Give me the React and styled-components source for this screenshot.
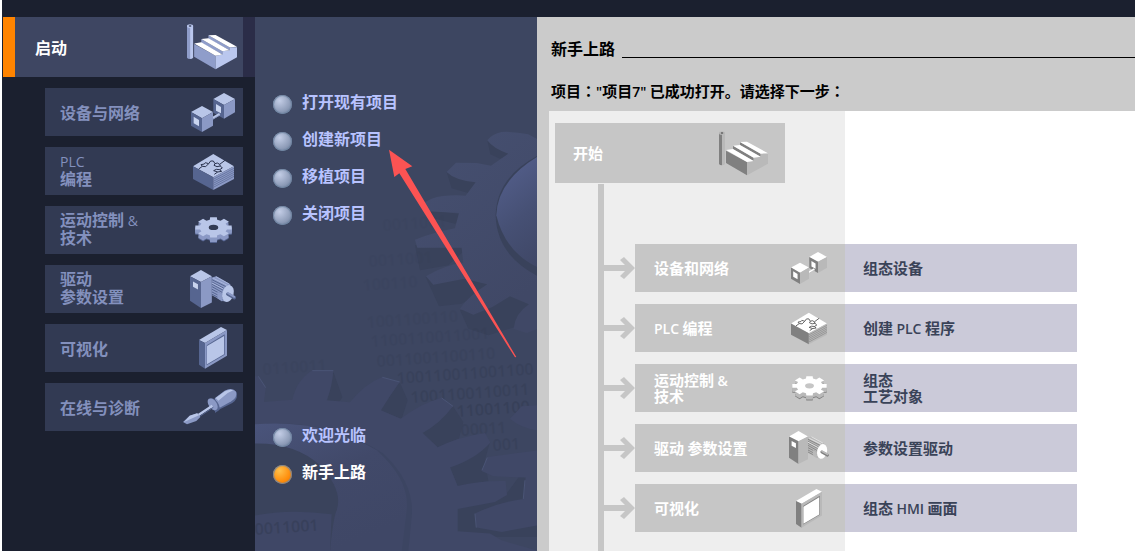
import React from "react";
import styled, { createGlobalStyle } from "styled-components";

const GlobalStyle = createGlobalStyle`
  *, *::before, *::after { box-sizing: border-box; }
  html { background: #fff; }
  body {
    margin: 0;
    font-family: "Noto Sans CJK SC", "Noto Sans", sans-serif;
    font-size: 16px;
    font-weight: 700;
  }
  button { font: inherit; border: 0; padding: 0; background: none; cursor: pointer; text-align: left; }
  a { color: inherit; text-decoration: none; }
  ul { list-style: none; margin: 0; padding: 0; }
`;

const BLUE = { left: "#566590", right: "#8b99c5", top: "#b9c6e8", win: "#c9d4ef", line: "#2c344f", hole: "#323a53" };
const BRIGHT = { left: "#8f9dca", right: "#bac7ee", top: "#ffffff", win: "#ffffff", line: "#2c344f", hole: "#3e4662" };
const GRAY = { left: "#808080", right: "#b9b9b9", top: "#ffffff", win: "#ffffff", line: "#505050", hole: "#c6c6c6" };

/* ---------- drawings ---------- */

const Drawing = styled.svg`
  display: block;
  flex: none;
  width: ${(p) => p.$w}px;
  overflow: visible;
`;

function FactoryIcon({ c, w }) {
  return (
    <Drawing $w={w} viewBox="0 0 147 134" aria-hidden="true">
      <path fill={c.left} d="M0 5H9V103Q2 103 0 99Z" />
      <path fill={c.right} d="M9 5H18V99Q15 103 9 103Z" />
      <ellipse cx="9" cy="6" rx="9" ry="5.5" fill={c.right} />
      <ellipse cx="9" cy="6" rx="4" ry="3" fill={c.line} opacity=".7" />
      <path fill={c.left} d="M21 59L84 93V133L21 96ZM42 44L104 80V90L42 55ZM63 33L125 68V77L63 43Z" />
      <path fill={c.right} d="M84 93L104 90V80L125 77V68L147 68V98L84 133Z" />
      <path fill={c.top} d="M21 57L42 54L104 90L84 93ZM42 44L63 42L125 77L104 80ZM63 33L84 32L147 67L125 68Z" />
    </Drawing>
  );
}

function DevicesIcon({ c, w }) {
  return (
    <Drawing $w={w} viewBox="0 0 132 117" aria-hidden="true">
      <path fill={c.top} d="M99 0L132 18L99 36L67 18Z" />
      <path fill={c.left} d="M67 18L99 36V77L67 59Z" />
      <path fill={c.right} d="M99 36L132 18V58L99 77Z" />
      <path fill={c.win} d="M75 33L90 42V61L75 53Z" />
      <path stroke={c.top} strokeWidth="7" d="M64 76L86 63" />
      <path stroke={c.right} strokeWidth="3" d="M65 79L87 66" />
      <path fill={c.top} d="M33 39L66 57L33 76L0 57Z" />
      <path fill={c.left} d="M0 57L33 76V117L0 98Z" />
      <path fill={c.right} d="M33 76L66 57V98L33 117Z" />
      <path fill={c.win} d="M8 71L24 81V100L8 91Z" />
    </Drawing>
  );
}

function PlcIcon({ c, w }) {
  return (
    <Drawing $w={w} viewBox="0 -6 123 114" aria-hidden="true">
      <path fill={c.top} d="M61 0L123 37L61 70L0 37Z" />
      <path fill={c.left} d="M0 37L61 70V108L0 75Z" />
      <path fill={c.right} d="M61 70L123 37V75L61 108Z" />
      <path
        stroke={c.left}
        strokeWidth="2"
        fill="none"
        d="M61 76L123 43M61 82L123 49M61 88L123 55M61 94L123 61M61 100L123 67"
      />
      <path
        stroke={c.line}
        strokeWidth="3"
        fill="none"
        strokeLinejoin="round"
        d="M17 45L28 37L24 32L34 30L37 26L47 29L53 21H61L66 29L73 27L80 31L96 19M28 37L38 38L47 29M66 29L63 34L72 38L82 36L80 31M82 36L88 42L80 47L86 52L74 54L64 61M80 47L70 46L62 50L74 54"
      />
    </Drawing>
  );
}

const gearPath = (() => {
  const points = [];
  const teeth = 8;
  for (let i = 0; i < teeth; i += 1) {
    const mid = (i / teeth) * Math.PI * 2;
    [[-0.27, 0.76], [-0.19, 1], [0.19, 1], [0.27, 0.76]].forEach(([offset, r]) => {
      points.push(
        `${Math.round(55 + 55 * r * Math.cos(mid + offset))} ${Math.round(31 + 31 * r * Math.sin(mid + offset))}`
      );
    });
  }
  return `M${points.join("L")}Z`;
})();

function GearIcon({ c, w }) {
  return (
    <Drawing $w={w} viewBox="0 0 110 78" aria-hidden="true">
      {[16, 13, 10].map((y) => (
        <path key={y} d={gearPath} fill={c.left} transform={`translate(0 ${y})`} />
      ))}
      {[13, 10, 7, 4].map((y) => (
        <path key={y} d={gearPath} fill={c.right} transform={`translate(0 ${y})`} />
      ))}
      <path d={gearPath} fill={c.top} />
      <ellipse cx="55" cy="31" rx="14" ry="8" fill={c.hole} />
    </Drawing>
  );
}

function MotorIcon({ c, w }) {
  return (
    <Drawing $w={w} viewBox="0 0 139 115" aria-hidden="true">
      <path fill={c.right} d="M66 23L80 19L122 43L112 96L98 94L66 76Z" />
      <path stroke={c.left} strokeWidth="3" fill="none" d="M66 29L108 50M66 36L102 55M66 43L100 61M66 50L98 68M66 58L98 75M66 66L98 83M66 73L98 90" />
      <path stroke={c.top} strokeWidth="2" fill="none" d="M70 25L112 46M66 39L100 57M78 20L118 42" />
      <path fill={c.right} d="M83 66L97 72V95L83 86Z" />
      <ellipse cx="115" cy="71" rx="17" ry="26" fill={c.top} transform="rotate(14 115 71)" />
      <path stroke={c.left} strokeWidth="10" strokeLinecap="round" d="M114 73L134 84" />
      <path stroke={c.right} strokeWidth="6" strokeLinecap="round" d="M115 70L134 81" />
      <path fill={c.top} d="M33 0L66 19L33 36L0 19Z" />
      <path fill={c.left} d="M0 19L33 36V115L0 93Z" />
      <path fill={c.right} d="M33 36L66 19V98L33 115Z" />
      <path fill={c.win} d="M9 35L24 43V59L9 51Z" />
    </Drawing>
  );
}

function ScreenIcon({ c, w }) {
  return (
    <Drawing $w={w} viewBox="0 0 84 125" aria-hidden="true">
      <path fill={c.top} d="M0 39L66 0L84 9L18 48Z" />
      <path fill={c.left} d="M0 39L18 48V125L0 113Z" />
      <path fill={c.right} d="M18 48L84 9V86L18 125Z" />
      <path fill={c.left} d="M23 55L77 22V83L23 115Z" />
      <path fill={c.top} d="M24 57L75 27V82L24 112Z" />
    </Drawing>
  );
}

function ScrewdriverIcon({ c, w }) {
  return (
    <Drawing $w={w} viewBox="0 0 180 106" aria-hidden="true">
      <path fill={c.left} d="M95 30L125 6Q148 -6 161 10Q167 30 148 42L112 60L96 72Z" />
      <path fill={c.right} d="M95 28L125 5Q148 -6 159 8Q164 25 145 37L110 56Z" />
      <path fill={c.top} d="M98 27L126 7Q140 -1 151 4Q136 10 126 19L106 35Z" />
      <ellipse cx="93" cy="47" rx="13" ry="22" fill={c.left} transform="rotate(-35 93 47)" />
      <ellipse cx="89" cy="46" rx="12" ry="20" fill={c.right} transform="rotate(-35 89 46)" />
      <path stroke={c.top} strokeWidth="7" d="M88 50L43 80" />
      <path stroke={c.left} strokeWidth="3" d="M91 55L46 85" />
      <path fill={c.right} d="M20 80L44 73L52 84L40 96L12 106L0 99Z" />
      <path fill={c.top} d="M20 80L42 73L48 79L3 99Z" />
    </Drawing>
  );
}

const Backdrop = styled.svg`
  position: absolute;
  top: 0;
  left: 0;
  z-index: 0;
  width: 282px;
  height: 534px;
  pointer-events: none;
`;

const digitRows = [
  [128, 214, "0011001", 0.06],
  [114, 250, "0011001", 0.07],
  [108, 274, "100110", 0.08],
  [112, 311, "1001100110", 0.1],
  [116, 330, "1100110011001", 0.12],
  [122, 350, "0011001100110", 0.16],
  [142, 367, "100110011001100", 0.24],
  [156, 386, "1001100110011", 0.26],
  [202, 400, "11001100", 0.32],
  [206, 419, "00011", 0.22],
  [238, 434, "001", 0.24],
  [8, 358, "0110011", 0.1],
];

/* Two large cog wheels, a third one meshing at the right edge, and rows of faint binary digits. */
function GearBackdrop() {
  return (
    <Backdrop viewBox="0 0 282 534" aria-hidden="true">
      <defs>
        <linearGradient id="wheel" x1="0" y1="0" x2=".5" y2="1">
          <stop offset="0" stopColor="#465071" />
          <stop offset="1" stopColor="#404866" />
        </linearGradient>
        <linearGradient id="hub" x1=".6" y1="0" x2=".9" y2="1">
          <stop offset="0" stopColor="#525d89" />
          <stop offset=".5" stopColor="#465074" />
          <stop offset="1" stopColor="#3f4766" />
        </linearGradient>
        <linearGradient id="ring" x1="0" y1="0" x2=".5" y2="1">
          <stop offset="0" stopColor="#4a547b" />
          <stop offset=".5" stopColor="#414969" />
          <stop offset="1" stopColor="#3f4766" />
        </linearGradient>
      </defs>
      <g transform="scale(.3333)">
        <path
          fill="#39425b"
          d="M697 370L706 412L735 425L780 410ZM575 465L590 514L640 528L680 495ZM500 575L520 600L600 620L640 595ZM480 685L495 760L580 745L640 690ZM512 780L552 868L620 860L710 810L690 760ZM615 880L640 935L700 955L780 930L830 860L765 825L700 870Z"
        />
        <path
          fill="url(#wheel)"
          d="M850 368L820 352Q780 343 740 345Q712 350 697 370Q715 395 760 410L708 446L665 438L603 437L575 465Q600 490 662 496L632 536Q570 532 530 545L498 562L505 582L612 588L600 634Q530 648 480 668L487 692H620L625 737Q565 745 513 778L535 803L628 785L697 802Q640 838 615 875L655 893L712 870L765 838L822 862Q780 890 776 935L815 948L850 935Z"
        />
        <path fill="#39425b" d="M850 415Q725 480 722 595Q725 715 850 778Z" />
        <path fill="url(#hub)" d="M850 418Q728 490 724 595Q750 705 850 752Z" />
      </g>
      <g fill="#2c3549" fontFamily="Open Sans, sans-serif" fontSize="16" fontWeight="600">
        {digitRows.map(([x, y, digits, opacity]) => (
          <text key={`${x}-${y}`} x={x} y={y} opacity={opacity} transform={`rotate(-4 ${x} ${y})`}>
            {digits}
          </text>
        ))}
      </g>
      <g transform="scale(.3333)">
        <path
          fill="#39425b"
          d="M235 1064L262 1140L250 1160H215ZM434 1095L458 1150L440 1206L375 1180ZM594 1168L625 1215L612 1265L548 1292L500 1245ZM704 1278L690 1330L700 1392L608 1408L585 1350ZM850 1300V1560H608V1475L755 1430Z"
        />
        <path
          fill="#404867"
          d="M0 1078L10 1078L32 1112L27 1155L112 1148Q125 1090 172 1060H235Q232 1110 215 1150L285 1156Q330 1100 382 1080L434 1095Q405 1135 378 1180L437 1205Q500 1158 560 1142L594 1168Q555 1220 503 1248L548 1291Q610 1260 690 1248L706 1277Q665 1325 585 1352L608 1407Q680 1390 752 1392L756 1434L720 1455L608 1476V1543L705 1550L740 1570L850 1602H0Z"
        />
        <path
          fill="#404867"
          d="M850 1300L698 1320L680 1362L715 1378L812 1382L805 1446Q730 1455 660 1490L665 1532L740 1545L850 1525ZM850 1165L800 1168L765 1205Q800 1235 850 1240Z"
        />
        <path fill="#3c4562" d="M0 1224Q215 1200 385 1310Q480 1400 470 1500L460 1602H0Z" />
        <path fill="url(#ring)" d="M0 1222Q205 1205 365 1300Q465 1390 455 1480L440 1602H0Z" />
        <path fill="#3a435c" d="M0 1280Q120 1278 195 1345Q265 1420 245 1480Q235 1500 225 1602H0Z" />
        <path fill="#3f4766" d="M0 1496Q100 1475 230 1492L225 1602H0Z" />
        <path
          fill="none"
          stroke="#4a5475"
          strokeWidth="3"
          d="M10 1078L32 1112M172 1061H235M382 1081L434 1095M560 1143L594 1168M805 1446L810 1390M660 1490L664 1532M697 1322L681 1360"
        />
      </g>
      <text x="0" y="518" fill="#2c3549" fontFamily="Open Sans, sans-serif" fontSize="16" fontWeight="600" opacity=".35" transform="rotate(-4 0 518)">
        0011001
      </text>
    </Backdrop>
  );
}

const PointerArrow = styled.svg`
  position: absolute;
  top: 132px;
  left: 133px;
  z-index: 2;
  width: 130px;
  height: 210px;
  pointer-events: none;
`;

/* ---------- frame ---------- */

const Page = styled.div`
  display: flex;
  flex-direction: column;
  min-height: 100vh;
  margin-left: 2px;
  background: #1b202f;
`;

const TopBar = styled.header`
  height: 17px;
  background: #1b202f;
`;

const Columns = styled.div`
  flex: 1;
  display: grid;
  grid-template-columns: 253px 282px minmax(0, 1fr);
`;

/* ---------- portal navigation ---------- */

const Portals = styled.nav`
  padding-left: 1px;
  background: #1b202f;
`;

const ActivePortal = styled.button`
  display: flex;
  align-items: center;
  justify-content: space-between;
  width: 100%;
  height: 60px;
  padding-left: 20px;
  padding-right: 6px;
  border-left: 12px solid #ff8400;
  border-right: 12px solid #2b2d48;
  background: #3e4662;
  color: #fff;
`;

const PortalList = styled.ul`
  display: flex;
  flex-direction: column;
  gap: 11px;
  padding: 11px 12px 11px 42px;
`;

const PortalButton = styled.button`
  display: flex;
  align-items: center;
  justify-content: space-between;
  width: 100%;
  height: 48px;
  padding-left: 15px;
  background: #323a53;
  color: #8390bd;
  line-height: 18px;
`;

const PortalLabel = styled.span`
  padding-bottom: ${(p) => (p.$twoLines ? 5 : 0)}px;
`;

const IconSlot = styled.span`
  display: flex;
  align-items: center;
  justify-content: center;
  width: ${(p) => p.$w}px;
`;

const Latin = styled.span`
  font-family: "Open Sans", "Noto Sans", sans-serif;
  font-size: 14px;
  font-weight: ${(p) => (p.$strong ? 600 : 400)};
  line-height: 1;
`;

const Colon = styled.span`
  font-family: "Noto Sans CJK TC", "Noto Sans CJK SC", sans-serif;
`;

const portals = [
  { label: <>设备与网络</>, Icon: DevicesIcon, w: 44 },
  { label: <><Latin>PLC</Latin><br />编程</>, Icon: PlcIcon, w: 41, twoLines: true },
  { label: <>运动控制 <Latin>&amp;</Latin><br />技术</>, Icon: GearIcon, w: 37, twoLines: true },
  { label: <>驱动<br />参数设置</>, Icon: MotorIcon, w: 46, twoLines: true },
  { label: <>可视化</>, Icon: ScreenIcon, w: 28 },
  { label: <>在线与诊断</>, Icon: ScrewdriverIcon, w: 60 },
];

/* ---------- task list ---------- */

const Tasks = styled.section`
  position: relative;
  display: flex;
  flex-direction: column;
  justify-content: space-between;
  padding: 67px 18px 60px;
  background: #3d4661;
`;

const TaskList = styled.ul`
  position: relative;
  z-index: 1;
`;

const TaskButton = styled.button`
  display: flex;
  align-items: center;
  gap: 10px;
  height: 37px;
  padding-bottom: 3px;
  color: ${(p) => (p.$active ? "#fff" : "#b8c3ff")};
`;

const Bullet = styled.span`
  width: 19px;
  height: 19px;
  margin-top: 6px;
  border-radius: 50%;
  background: ${(p) =>
    p.$active
      ? "radial-gradient(circle at 35% 30%, #ffc04a, #ff8c0a 60%, #d97400)"
      : "radial-gradient(circle at 35% 30%, #c3cde6, #8e9cb8 60%, #62738f)"};
  box-shadow: inset 0 0 1px 1px #6d83a0;
`;

/* ---------- first steps ---------- */

const Steps = styled.main`
  display: flex;
  flex-direction: column;
  padding-left: 12px;
  background: #cbcbcb;
  color: #000;
`;

const StepsHeader = styled.div`
  height: 94px;
  padding: 19px 0 0 2px;
`;

const TitleRow = styled.div`
  display: flex;
  align-items: center;
  gap: 7px;
  height: 24px;
`;

const Title = styled.h1`
  margin: 0;
  font-size: 16px;
  line-height: 24px;
`;

const Rule = styled.span`
  flex: 1;
  align-self: flex-end;
  height: 1px;
  margin-bottom: 2px;
  background: #000;
`;

const Message = styled.p`
  margin: 19px 0 0;
  font-size: 15px;
  line-height: 24px;
  white-space: nowrap;
`;

const Flow = styled.div`
  flex: 1;
  display: flex;
  flex-direction: column;
  padding: 12px 0 0 6px;
  background: linear-gradient(to right, #eeeeee 296px, #ffffff 296px);
  font-size: 15px;
  line-height: 16px;
`;

const StartTile = styled.div`
  display: flex;
  align-items: center;
  justify-content: space-between;
  width: 230px;
  height: 60px;
  padding: 0 17px 0 18px;
  background: #c6c6c6;
  color: #fff;
`;

const Branches = styled.ul`
  flex: 1;
  display: flex;
  flex-direction: column;
  gap: 12px;
  margin: 1px 0 0 43px;
  padding: 60px 12px 12px 0;
  border-left: 6px solid #c6c6c6;
`;

const Branch = styled.li`
  display: flex;
  align-items: center;
`;

const BranchArrow = styled.svg`
  display: block;
  flex: none;
  width: 31px;
  height: 24px;
`;

const BranchTile = styled.span`
  display: flex;
  align-items: center;
  justify-content: space-between;
  width: 210px;
  height: 48px;
  padding: 0 6px 0 19px;
  background: #c6c6c6;
  color: #fff;
`;

const BranchLink = styled.a`
  display: flex;
  align-items: center;
  width: 232px;
  height: 48px;
  padding-left: 18px;
  background: #cbcad9;
  color: #3a4358;
`;

const branches = [
  { label: <>设备和网络</>, action: <>组态设备</>, Icon: DevicesIcon, w: 36 },
  { label: <><Latin $strong>PLC</Latin> 编程</>, action: <>创建 <Latin $strong>PLC</Latin> 程序</>, Icon: PlcIcon, w: 36 },
  { label: <>运动控制 <Latin $strong>&amp;</Latin><br />技术</>, action: <>组态<br />工艺对象</>, Icon: GearIcon, w: 35 },
  { label: <>驱动 参数设置</>, action: <>参数设置驱动</>, Icon: MotorIcon, w: 40 },
  { label: <>可视化</>, action: <>组态 <Latin $strong>HMI</Latin> 画面</>, Icon: ScreenIcon, w: 26 },
];

function Task({ active, children }) {
  return (
    <li>
      <TaskButton type="button" $active={active}>
        <Bullet $active={active} />
        {children}
      </TaskButton>
    </li>
  );
}

export default function App() {
  return (
    <>
      <GlobalStyle />
      <Page>
        <TopBar />
        <Columns>
          <Portals>
            <ActivePortal type="button" aria-current="page">
              启动
              <FactoryIcon c={BRIGHT} w={50} />
            </ActivePortal>
            <PortalList>
              {portals.map(({ label, Icon, w, twoLines }, i) => (
                <li key={i}>
                  <PortalButton type="button">
                    <PortalLabel $twoLines={twoLines}>{label}</PortalLabel>
                    <IconSlot $w={60}>
                      <Icon c={BLUE} w={w} />
                    </IconSlot>
                  </PortalButton>
                </li>
              ))}
            </PortalList>
          </Portals>

          <Tasks>
            <GearBackdrop />
            <TaskList>
              <Task>打开现有项目</Task>
              <Task>创建新项目</Task>
              <Task>移植项目</Task>
              <Task>关闭项目</Task>
            </TaskList>
            <TaskList>
              <Task>欢迎光临</Task>
              <Task active>新手上路</Task>
            </TaskList>
            <PointerArrow viewBox="0 0 390 630" aria-hidden="true">
              <path fill="#fc5353" d="M3 2L73 52L52 60L385 624L381 625L34 73L19 84Z" />
            </PointerArrow>
          </Tasks>

          <Steps>
            <StepsHeader>
              <TitleRow>
                <Title>新手上路</Title>
                <Rule />
              </TitleRow>
              <Message>
                项目<Colon>：</Colon><Latin $strong>"</Latin>项目<Latin $strong>7"</Latin> 已成功打开。请选择下一步<Colon>：</Colon>
              </Message>
            </StepsHeader>
            <Flow>
              <StartTile>
                开始
                <FactoryIcon c={GRAY} w={49} />
              </StartTile>
              <Branches>
                {branches.map(({ label, action, Icon, w }, i) => (
                  <Branch key={i}>
                    <BranchArrow viewBox="0 0 31 24" aria-hidden="true">
                      <path fill="#c6c6c6" d="M0 9H21L16 4L20 1L31 12L20 23L16 20L21 15H0Z" />
                    </BranchArrow>
                    <BranchTile>
                      <span>{label}</span>
                      <IconSlot $w={60}>
                        <Icon c={GRAY} w={w} />
                      </IconSlot>
                    </BranchTile>
                    <BranchLink href="#">
                      <span>{action}</span>
                    </BranchLink>
                  </Branch>
                ))}
              </Branches>
            </Flow>
          </Steps>
        </Columns>
      </Page>
    </>
  );
}
